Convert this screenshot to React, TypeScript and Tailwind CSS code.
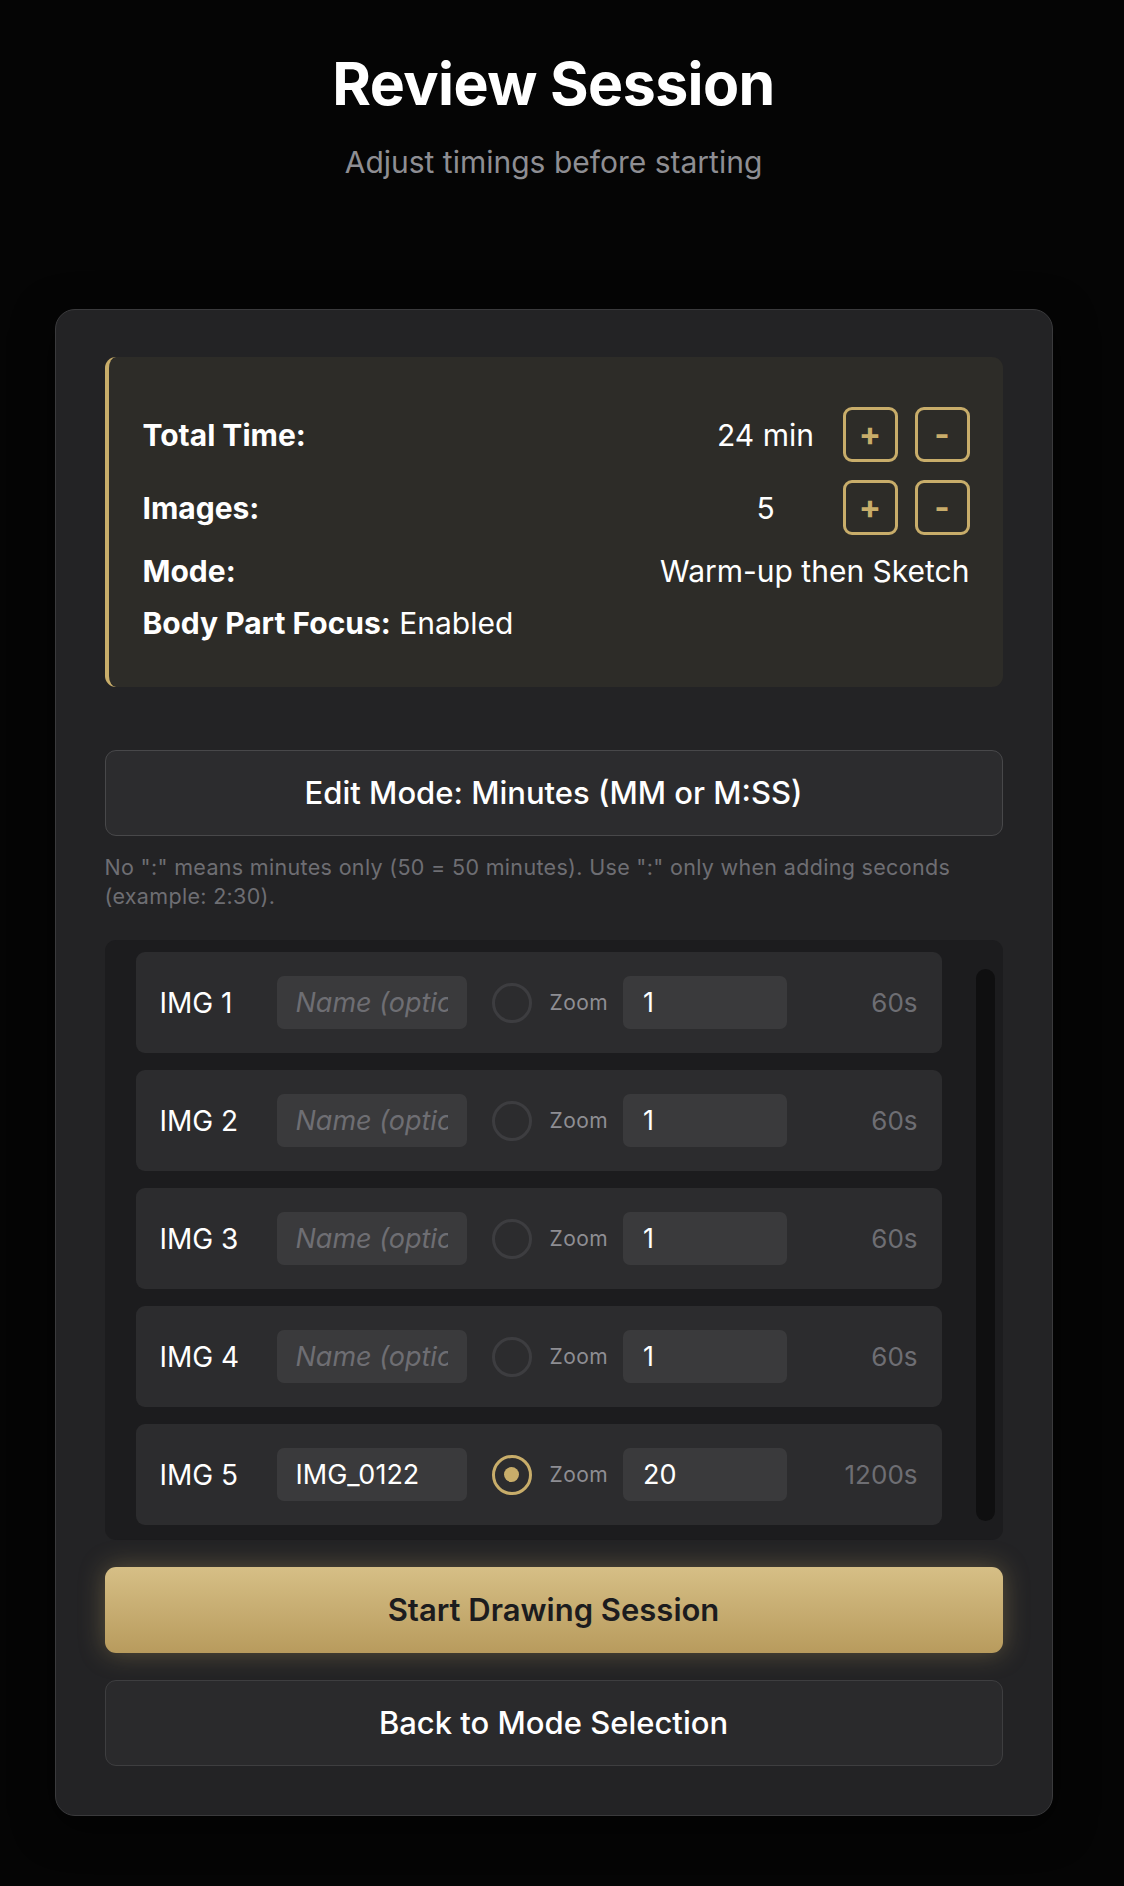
import React from "react";

const rows = [
  { id: 1, name: "", zoom: "1", secs: "60s", on: false },
  { id: 2, name: "", zoom: "1", secs: "60s", on: false },
  { id: 3, name: "", zoom: "1", secs: "60s", on: false },
  { id: 4, name: "", zoom: "1", secs: "60s", on: false },
  { id: 5, name: "IMG_0122", zoom: "20", secs: "1200s", on: true },
];

function StepButton({ label }: { label: string }) {
  return (
    <button className="flex h-[55px] w-[55px] items-center justify-center rounded-[9px] border-[3px] border-[#c8ad6a] text-[33px] font-bold leading-none text-[#c8ad6a]">
      {label}
    </button>
  );
}

function Radio({ on }: { on: boolean }) {
  if (on) {
    return (
      <span className="flex h-[40px] w-[40px] shrink-0 items-center justify-center rounded-full border-[3px] border-[#c8ad6a]">
        <span className="block h-[15px] w-[15px] rounded-full bg-[#c8ad6a]" />
      </span>
    );
  }
  return <span className="block h-[40px] w-[40px] shrink-0 rounded-full border-[3px] border-[#3d3d40]" />;
}

export default function App() {
  return (
    <div className="min-h-[1886px] bg-[#050505] pr-[17px] font-[Inter,sans-serif] text-white">
      <div className="mx-auto flex w-[998px] flex-col items-center pt-[50px]">
        <h1 className="text-[59px] font-bold leading-[67px] tracking-[-0.01em]">Review Session</h1>
        <p className="mt-[27px] text-[30px] leading-[36px] text-[#8e8e93]">Adjust timings before starting</p>

        <div className="mt-[129px] w-full rounded-[20px] border-[1.5px] border-[#3a3a3c] bg-[#232325] px-[49px] pb-[49px] pt-[47px] shadow-[0_10px_40px_rgba(0,0,0,0.6)]">
          {/* summary */}
          <div className="flex flex-col gap-[18px] rounded-[11px] border-l-[4px] border-[#c8ad6a] bg-[#2d2c28] pb-[46px] pl-[34px] pr-[33px] pt-[50px] text-[30px] leading-[36px]">
            <div className="flex items-center justify-between">
              <span className="font-bold">Total Time:</span>
              <div className="flex items-center">
                <span className="w-[100px] text-center">24 min</span>
                <div className="ml-[27px] flex gap-[17px]">
                  <StepButton label="+" />
                  <StepButton label="-" />
                </div>
              </div>
            </div>
            <div className="flex items-center justify-between">
              <span className="font-bold">Images:</span>
              <div className="flex items-center">
                <span className="w-[100px] text-center">5</span>
                <div className="ml-[27px] flex gap-[17px]">
                  <StepButton label="+" />
                  <StepButton label="-" />
                </div>
              </div>
            </div>
            <div className="flex items-center justify-between">
              <span className="font-bold">Mode:</span>
              <span>Warm-up then Sketch</span>
            </div>
            <div className="-mt-[2px]">
              <span className="font-bold">Body Part Focus:</span> Enabled
            </div>
          </div>

          <button className="mt-[63px] flex h-[86px] w-full items-center justify-center rounded-[11px] border-[1.5px] border-[#48484a] bg-[#2c2c2e] text-[31px] font-medium">
            Edit Mode: Minutes (MM or M:SS)
          </button>

          <p className="mt-[17px] text-[21.5px] leading-[29px] tracking-[0.015em] text-[#6e6e73]">
            No ":" means minutes only (50 = 50 minutes). Use ":" only when adding seconds (example: 2:30).
          </p>

          {/* image list */}
          <div className="mt-[29px] flex rounded-[11px] bg-[#1c1c1e] pb-[15px] pl-[31px] pr-[8px] pt-[12px]">
            <div className="flex w-[807px] flex-col gap-[17px]">
              {rows.map((r) => (
                <div key={r.id} className="flex h-[101px] items-center rounded-[9px] bg-[#2c2c2e] px-[24px]">
                  <span className="w-[117px] shrink-0 text-[28px]">IMG {r.id}</span>
                  <input
                    readOnly
                    value={r.name}
                    placeholder="Name (optional)"
                    className="h-[53px] w-[190px] shrink-0 rounded-[7px] bg-[#3a3a3c] px-[19px] text-[27px] text-white outline-none placeholder:italic placeholder:text-[#6e6e73]"
                  />
                  <div className="ml-[25px]">
                    <Radio on={r.on} />
                  </div>
                  <span className="ml-[18px] text-[21px] tracking-[0.02em] text-[#8e8e93]">Zoom</span>
                  <input
                    readOnly
                    value={r.zoom}
                    className="ml-[15px] h-[53px] w-[164px] shrink-0 rounded-[7px] bg-[#3a3a3c] px-[20px] text-[27px] text-white outline-none"
                  />
                  <span className="flex-1 text-right text-[26px] text-[#6e6e73]">{r.secs}</span>
                </div>
              ))}
            </div>
            <div className="mb-[4px] ml-[34px] mt-[17px] w-[19px] rounded-full bg-[#0f0f10]" />
          </div>

          <button className="mt-[27px] flex h-[86px] w-full items-center justify-center rounded-[11px] bg-linear-to-b from-[#d6bf86] to-[#b89b5d] text-[31px] font-semibold text-[#1c1c1e] shadow-[0_0_26px_rgba(201,173,107,0.35)]">
            Start Drawing Session
          </button>

          <button className="mt-[27px] flex h-[86px] w-full items-center justify-center rounded-[11px] border-[1.5px] border-[#3e3e40] bg-[#2a2a2c] text-[31px] font-medium">
            Back to Mode Selection
          </button>
        </div>
      </div>
    </div>
  );
}
